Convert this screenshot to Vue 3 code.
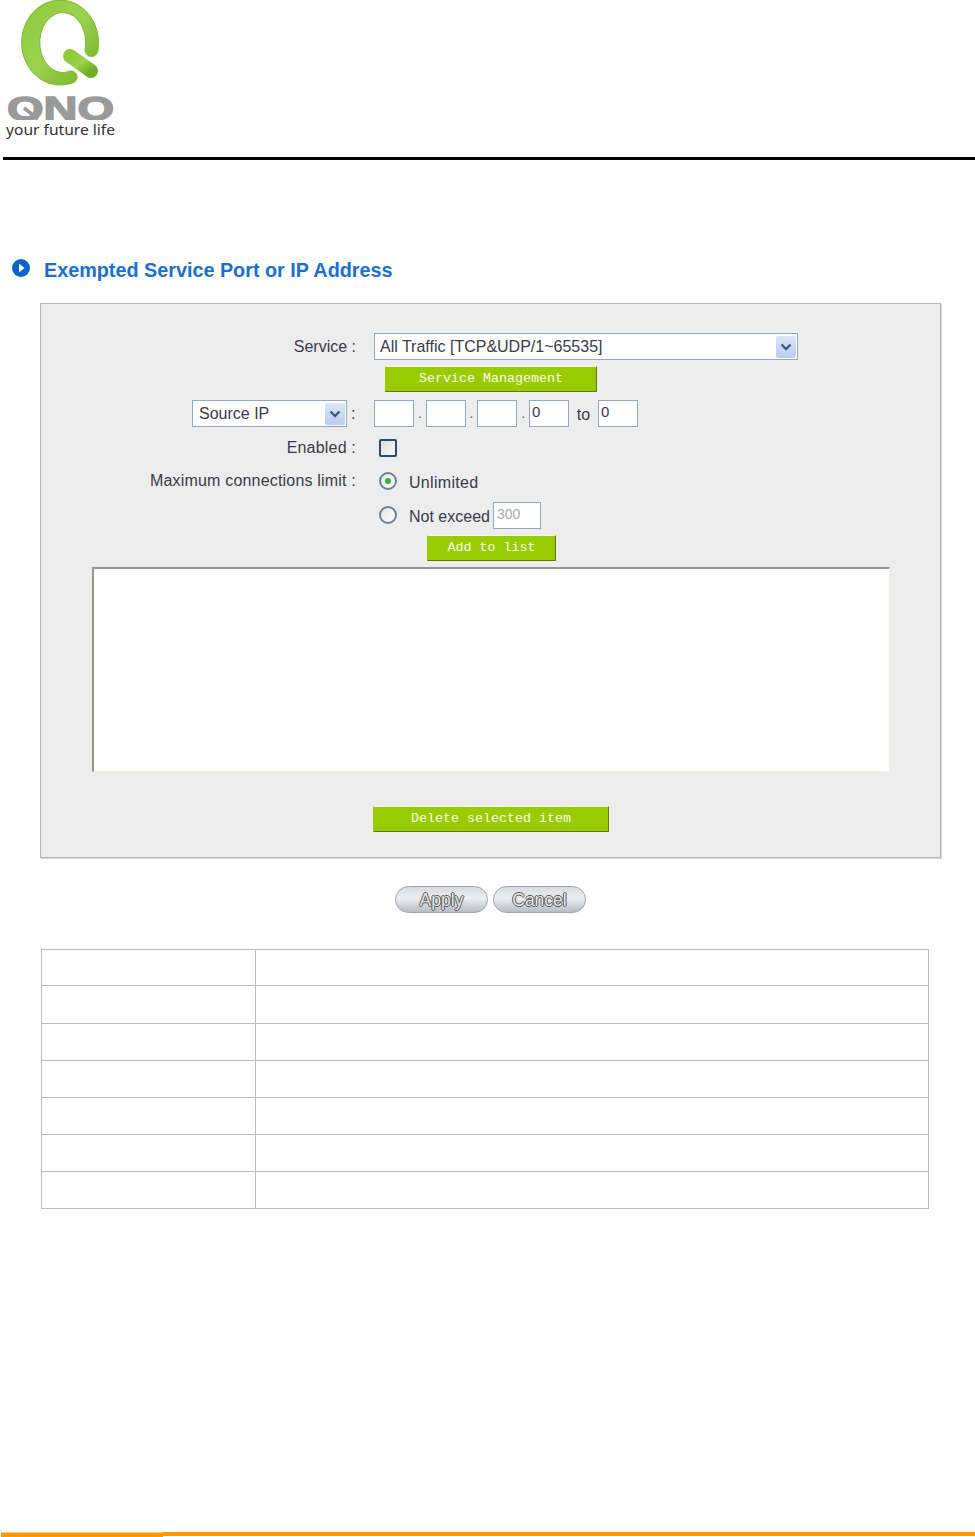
<script setup>
// heights taken from the reference table
const tableRows = [36, 38, 37, 37, 37, 37, 37]
const ipParts = ['', '', '', '0']
</script>

<template>
  <div class="page">
    <header class="header">
      <svg class="logo" width="120" height="140" viewBox="0 0 120 140">
        <defs>
          <linearGradient id="qGreen" x1="0" y1="0" x2="1" y2="1">
            <stop offset="0" stop-color="#8fca3c" />
            <stop offset="0.5" stop-color="#9ad24e" />
            <stop offset="1" stop-color="#6fae22" />
          </linearGradient>
          <clipPath id="nameClip">
            <rect x="0" y="90" width="120" height="30" />
          </clipPath>
        </defs>
        <path
          d="M98 50 A38.5 42.5 0 1 0 72 83 A6 6 0 0 0 70 71 A23 30 0 1 1 85 50 A6.5 6.5 0 0 0 98 50 Z"
          fill="url(#qGreen)"
          stroke="#7dba2c"
          stroke-width="1"
        />
        <path d="M70 56 L91 71" fill="none" stroke="url(#qGreen)" stroke-width="14" stroke-linecap="round" />
        <g clip-path="url(#nameClip)">
          <text x="7" y="120" class="logo-name" textLength="107" lengthAdjust="spacingAndGlyphs">QNO</text>
        </g>
        <path d="M24 108 L38 119" fill="none" stroke="#9a9a9a" stroke-width="3.5" />
        <text x="6" y="135" class="logo-tag" textLength="109" lengthAdjust="spacingAndGlyphs">your future life</text>
      </svg>
    </header>
    <div class="rule"></div>

    <h1 class="title">
      <svg class="title-icon" width="18" height="18" viewBox="0 0 18 18">
        <circle cx="9" cy="9" r="9" fill="#0a64c8" />
        <path d="M7 4.6 L12.4 9 L7 13.4 Z" fill="#fff" />
      </svg>
      <span>Exempted Service Port or IP Address</span>
    </h1>

    <section class="panel">
      <div class="row service-row">
        <div class="label">Service :</div>
        <div class="select wide">
          <span>All Traffic [TCP&amp;UDP/1~65535]</span>
          <span class="arrow">
            <svg width="12" height="8" viewBox="0 0 12 8"><path d="M1.5 1.5 L6 6 L10.5 1.5" fill="none" stroke="#3d5a80" stroke-width="2.4" /></svg>
          </span>
        </div>
      </div>

      <div class="btn-row mgmt-row">
        <button class="green-btn mgmt">Service Management</button>
      </div>

      <div class="row ip-row">
        <div class="label">
          <div class="select source">
            <span>Source IP</span>
            <span class="arrow">
              <svg width="12" height="8" viewBox="0 0 12 8"><path d="M1.5 1.5 L6 6 L10.5 1.5" fill="none" stroke="#3d5a80" stroke-width="2.4" /></svg>
            </span>
          </div>
          <span class="colon">:</span>
        </div>
        <div class="ip-fields">
          <template v-for="(part, i) in ipParts" :key="i">
            <span v-if="i > 0" class="dot">.</span>
            <div class="input">{{ part }}</div>
          </template>
          <span class="to">to</span>
          <div class="input">0</div>
        </div>
      </div>

      <div class="row enabled-row">
        <div class="label spaced">Enabled :</div>
        <div class="checkbox"></div>
      </div>

      <div class="row limit-row">
        <div class="label spaced">Maximum connections limit :</div>
        <div class="radio-wrap">
          <span class="radio on"></span>
          <span class="radio-text unlimited">Unlimited</span>
        </div>
      </div>

      <div class="row exceed-row">
        <div class="label"></div>
        <div class="radio-wrap">
          <span class="radio"></span>
          <span class="radio-text">Not exceed</span>
          <div class="input small">300</div>
        </div>
      </div>

      <div class="btn-row add-row">
        <button class="green-btn add">Add to list</button>
      </div>

      <div class="listbox"></div>

      <div class="btn-row delete-row">
        <button class="green-btn delete">Delete selected item</button>
      </div>
    </section>

    <div class="actions">
      <button class="pill">Apply</button>
      <button class="pill">Cancel</button>
    </div>

    <table class="empty-table">
      <tbody>
        <tr v-for="(h, i) in tableRows" :key="i" :style="{ height: h + 'px' }">
          <td class="first"></td>
          <td></td>
        </tr>
      </tbody>
    </table>

    <footer class="footer">
      <span class="seg seg-a"></span>
      <span class="seg seg-b"></span>
      <span class="seg seg-c"></span>
    </footer>
  </div>
</template>

<style>
html,
body {
  margin: 0;
  background: #fff;
}
</style>

<style scoped>
.page {
  height: 1537px;
  display: flex;
  flex-direction: column;
  overflow: hidden;
  font-family: "Liberation Sans", Arial, sans-serif;
  font-size: 16px;
  color: #3a3a4a;
}

.header {
  height: 157px;
}

.logo {
  display: block;
}

.logo-name {
  font-family: "Liberation Sans", Arial, sans-serif;
  font-weight: 700;
  font-size: 33px;
  fill: #9a9a9a;
  stroke: #9a9a9a;
  stroke-width: 1.4px;
}

.logo-tag {
  font-family: "Noto Sans", sans-serif;
  font-size: 14px;
  fill: #333;
}

.rule {
  height: 3px;
  margin-left: 3px;
  background: #000;
}

.title {
  display: flex;
  align-items: center;
  gap: 14px;
  margin: 98px 0 0 12px;
  height: 24px;
  font-size: 19.8px;
  font-weight: 700;
  color: #1a6fd0;
}

.title-icon {
  margin-top: -4px;
}

.panel {
  width: 899px;
  height: 524px;
  margin: 21px 0 0 40px;
  padding-top: 29px;
  background: #ededed;
  border: 1px solid #b4b6b8;
  box-shadow: 1px 1px 0 #d4d6d8;
}

.row {
  display: flex;
  align-items: center;
  gap: 18px;
}

.label {
  width: 315px;
  flex-shrink: 0;
  display: flex;
  justify-content: flex-end;
  align-items: center;
  gap: 4px;
}

.label.spaced {
  letter-spacing: 0.19px;
}

.service-row {
  height: 27px;
}

.select {
  display: flex;
  align-items: center;
  justify-content: space-between;
  box-sizing: border-box;
  height: 27px;
  padding: 0 1px 0 5px;
  background: #fff;
  border: 1px solid #8fa8c4;
}

.select.wide {
  width: 424px;
}

.select.source {
  width: 155px;
}

.select.source > span:first-child {
  padding-left: 1px;
}

.arrow {
  display: flex;
  align-items: center;
  justify-content: center;
  width: 20px;
  height: 22px;
  border-radius: 2px;
  background: linear-gradient(#dbe6f8, #b9cdf0);
}

.btn-row {
  display: flex;
}

.green-btn {
  box-sizing: border-box;
  height: 26px;
  padding: 0 0 2px;
  background: #99cc00;
  border: 1px solid;
  border-color: #f4f8e0 #5f7a10 #5f7a10 #99cc00;
  font-family: "Liberation Mono", monospace;
  font-size: 13.33px;
  color: #fbfbe8;
}

.mgmt-row {
  margin: 6px 0 0 344px;
}

.mgmt {
  width: 212px;
}

.ip-row {
  height: 27px;
  margin-top: 8px;
}

.colon {
  width: 5px;
}

.ip-fields {
  display: flex;
  align-items: center;
}

.input {
  box-sizing: border-box;
  width: 40px;
  height: 27px;
  padding: 1px 2px;
  background: #fff;
  border: 1px solid #8fa8c4;
  font-size: 15px;
  line-height: 20px;
}

.dot {
  width: 11.67px;
  text-align: center;
  font-size: 14px;
  line-height: 27px;
  color: #666;
}

.to {
  width: 29px;
  text-align: center;
  padding-top: 2px;
}

.enabled-row {
  height: 18px;
  margin-top: 12px;
}

.checkbox {
  box-sizing: border-box;
  width: 18px;
  height: 18px;
  margin-left: 5px;
  border: 2px solid #2c4a6e;
  border-radius: 2px;
  background: linear-gradient(135deg, #dcdcd6, #fafafa);
}

.limit-row {
  height: 24px;
  margin-top: 12px;
}

.radio-wrap {
  display: flex;
  align-items: center;
  gap: 3px;
  margin-left: 5px;
}

.radio-text {
  padding-top: 3px;
}

.radio-text.unlimited {
  letter-spacing: 0.3px;
}

.radio {
  box-sizing: border-box;
  position: relative;
  width: 18px;
  height: 18px;
  margin-right: 9px;
  border: 2px solid #6a8198;
  border-radius: 50%;
  background: linear-gradient(135deg, #e6e6e0, #fcfcfc);
}

.radio.on::after {
  content: "";
  position: absolute;
  top: 4px;
  left: 4px;
  width: 6px;
  height: 6px;
  border-radius: 50%;
  background: #35b04a;
}

.exceed-row {
  height: 26px;
  margin-top: 9px;
}

.input.small {
  width: 48px;
  margin-left: 0;
  padding-left: 3px;
  color: #aaa;
  font-size: 14px;
}

.add-row {
  margin: 7px 0 0 386px;
}

.add {
  width: 129px;
}

.listbox {
  box-sizing: border-box;
  width: 798px;
  height: 205px;
  margin: 6px 0 0 51px;
  background: #fff;
  border-style: solid;
  border-width: 2px 1px 1px 2px;
  border-color: #94968c #f0eedd #f0eedd #94968c;
}

.delete-row {
  margin: 34px 0 0 332px;
}

.delete {
  width: 236px;
}

.actions {
  display: flex;
  gap: 5px;
  margin: 28px 0 0 395px;
}

.pill {
  box-sizing: border-box;
  width: 93px;
  height: 27px;
  padding: 1px 0 0;
  border: 1px solid #9ea2aa;
  border-radius: 14px;
  background: linear-gradient(#d8dade, #eceef0 45%, #b8bcc4);
  font-family: "Liberation Sans", Arial, sans-serif;
  font-size: 17.5px;
  color: #e8e8e8;
  text-shadow: 1px 0 0 #555, -1px 0 0 #555, 0 1px 0 #555, 0 -1px 0 #555;
}

.empty-table {
  width: 888px;
  margin: 36px 0 0 41px;
  border-collapse: collapse;
  table-layout: fixed;
}

.empty-table td {
  padding: 0;
  border: 1px solid #bbb;
}

.empty-table .first {
  width: 213px;
}

.footer {
  display: flex;
  height: 6px;
  margin: auto 0 0 1px;
}

.seg {
  display: block;
  background: #ff9900;
}

.seg-a {
  width: 162px;
  height: 4px;
  margin-top: 1px;
  border-top: 1px solid #f5c98c;
}

.seg-b {
  width: 407px;
  height: 4px;
  margin-top: 1px;
}

.seg-c {
  flex: 1;
  height: 4px;
  margin-top: 1px;
}
</style>
